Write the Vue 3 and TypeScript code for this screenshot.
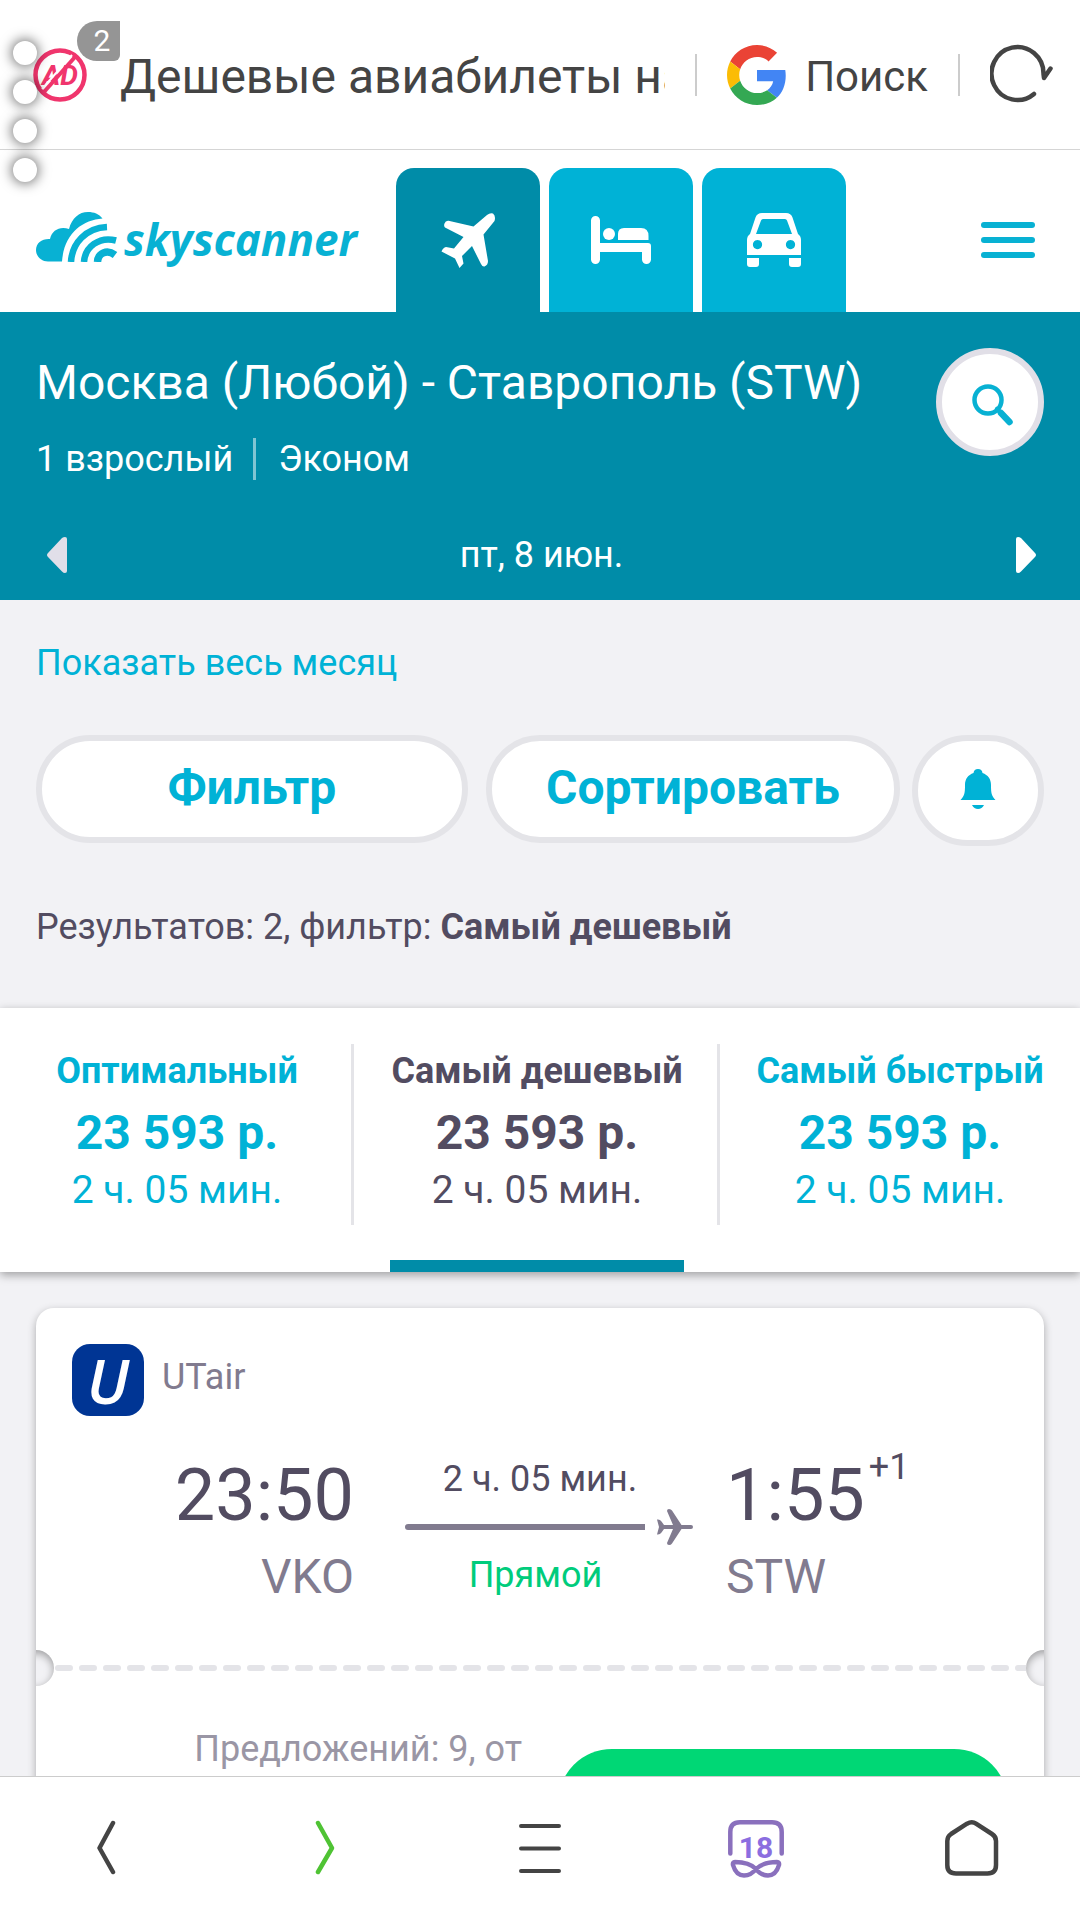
<script setup lang="ts">
import { ref } from 'vue'

interface SortTab {
  id: string
  label: string
  price: string
  duration: string
}

const sortTabs: SortTab[] = [
  { id: 'best', label: 'Оптимальный', price: '23 593 р.', duration: '2 ч. 05 мин.' },
  { id: 'cheapest', label: 'Самый дешевый', price: '23 593 р.', duration: '2 ч. 05 мин.' },
  { id: 'fastest', label: 'Самый быстрый', price: '23 593 р.', duration: '2 ч. 05 мин.' },
]

const activeSort = ref('cheapest')
</script>

<template>
  <div class="browser">
    <header class="address-bar">
      <button class="ad-block" type="button" aria-label="Блокировка рекламы">
        <svg width="54" height="54" viewBox="0 0 54 54">
          <circle cx="27" cy="27" r="24.5" fill="none" stroke="#f0356d" stroke-width="4.5" />
          <text x="27" y="37" text-anchor="middle" class="ad-text">AD</text>
          <path d="M9 41 L39 7" stroke="#fff" stroke-width="2" />
          <path d="M11 44 L42 9" stroke="#f0356d" stroke-width="4" />
        </svg>
        <span class="ad-count">2</span>
      </button>
      <div class="page-title">Дешевые авиабилеты на</div>
      <span class="rule"></span>
      <button class="search-engine" type="button">
        <svg width="60" height="60" viewBox="0 0 48 48">
          <path fill="#EA4335" d="M24 9.5c3.54 0 6.71 1.22 9.21 3.6l6.85-6.85C35.9 2.38 30.47 0 24 0 14.62 0 6.51 5.38 2.56 13.22l7.98 6.19C12.43 13.72 17.74 9.5 24 9.5z" />
          <path fill="#4285F4" d="M46.98 24.55c0-1.57-.15-3.09-.38-4.55H24v9.02h12.94c-.58 2.96-2.26 5.48-4.78 7.18l7.73 6c4.51-4.18 7.09-10.36 7.09-17.65z" />
          <path fill="#FBBC05" d="M10.53 28.59c-.48-1.45-.76-2.99-.76-4.59s.27-3.14.76-4.59l-7.98-6.19C.92 16.46 0 20.12 0 24c0 3.88.92 7.54 2.56 10.78l7.97-6.19z" />
          <path fill="#34A853" d="M24 48c6.48 0 11.93-2.13 15.89-5.81l-7.73-6c-2.15 1.45-4.92 2.3-8.16 2.3-6.26 0-11.57-4.22-13.47-9.91l-7.98 6.19C6.51 42.62 14.62 48 24 48z" />
        </svg>
        <span>Поиск</span>
      </button>
      <span class="rule"></span>
      <button class="reload" type="button" aria-label="Обновить">
        <svg width="64" height="62" viewBox="0 0 64 62" fill="none" stroke="#444" stroke-width="4.5" stroke-linecap="round" stroke-linejoin="round">
          <path d="M44 50 A26 26.5 0 1 1 53.500 30 L54 34 L60.500 24.500" />
        </svg>
      </button>
      <div class="edge-dots"><i></i><i></i><i></i><i></i></div>
    </header>

    <main class="page">
      <div class="site-header">
        <a class="logo" href="#" aria-label="skyscanner">
          <svg width="82" height="50" viewBox="0 0 82 50">
            <path fill="#08b1d3" d="M26 49.5 H12 C5 49.5 0 44 0 38 C0 31 6 26.500 14 27 C16 18 24 14 33 17 C36 6 43 0 52 0 C58 0 63 2 66.500 6.500 C46 8 28 22 26 49.5 Z" />
            <g fill="none" stroke="#08b1d3">
              <path stroke-width="6.500" d="M35 50 C36 31 50 16 71 15" />
              <path stroke-width="6.500" d="M48 50 C49 35 63 24 80 28.500" />
              <path stroke-width="7.500" d="M61.500 50 C62 41 71 37 79 43" />
            </g>
          </svg>
          <span>skyscanner</span>
        </a>
        <nav class="verticals">
          <a class="vertical current" href="#" aria-label="Авиабилеты">
            <svg width="56" height="58" viewBox="0 0 56 58" fill="#fff">
              <path d="M33.500 15.500 L47 4 Q50 1.500 53 2.500 Q56 5 54.500 10 L43.500 23.500 L48 50 Q48 54 44.500 55.500 Q42.500 56 41 53 L32 35 L22 45 L23.500 52.500 L19.500 57 L15 47.500 L1.500 40.500 Q3 36.500 6 36 L14 37.500 L23.500 26 L5 16.500 Q3.500 15 4.500 12.500 Q5.500 9.500 8.500 9.800 Z" />
            </svg>
          </a>
          <a class="vertical" href="#" aria-label="Отели">
            <svg width="60" height="48" viewBox="0 0 60 48" fill="#fff">
              <path d="M0 4.500 a4.500 4.500 0 0 1 9 0 V27 H57 Q60 27 60 30 V43.500 a4.500 4.500 0 0 1 -9 0 V36 H9 V43.500 a4.500 4.500 0 0 1 -9 0 Z" />
              <circle cx="18" cy="18" r="6" />
              <path d="M27 24 V18 Q27 12 33 12 H50 Q57.500 12 57.500 20 V24 Z" />
            </svg>
          </a>
          <a class="vertical" href="#" aria-label="Автомобили">
            <svg width="54" height="54" viewBox="0 0 54 54" fill="#fff">
              <path fill-rule="evenodd" d="M15 0 H39 Q44 0 45.500 4.500 L51 21 Q54 23 54 27 V42 H0 V27 Q0 23 3 21 L8.500 4.500 Q10 0 15 0 Z M16 6 Q14.500 6 14 7.500 L9 21 H45 L40 7.500 Q39.500 6 38 6 Z M10.500 27 a4.600 4.600 0 1 0 .01 0 Z M43.500 27 a4.600 4.600 0 1 0 .01 0 Z" />
              <path d="M0 45 H12 V51 Q12 54 9 54 H3 Q0 54 0 51 Z M42 45 H54 V51 Q54 54 51 54 H45 Q42 54 42 51 Z" />
            </svg>
          </a>
        </nav>
        <button class="menu" type="button" aria-label="Меню">
          <svg width="54" height="36" viewBox="0 0 54 36" fill="#08b1d3">
            <rect width="54" height="6" rx="3" />
            <rect y="15" width="54" height="6" rx="3" />
            <rect y="30" width="54" height="6" rx="3" />
          </svg>
        </button>
      </div>

      <section class="summary">
        <div class="summary-top">
          <div>
            <h1>Москва (Любой) - Ставрополь (STW)</h1>
            <p class="travellers"><span>1 взрослый</span><span>Эконом</span></p>
          </div>
          <button class="edit-search" type="button" aria-label="Изменить поиск">
            <svg width="48" height="48" viewBox="0 0 48 48" fill="none" stroke="#08b1d3" stroke-linecap="round">
              <circle cx="22" cy="22" r="13.500" stroke-width="4.500" />
              <path stroke-width="6.500" d="M35 35 L43.500 44" />
              <path stroke-width="4.500" d="M31 31 L36 36" />
            </svg>
          </button>
        </div>
        <div class="dates">
          <button type="button" aria-label="Предыдущий день">
            <svg width="20" height="36" viewBox="0 0 20 36"><path fill="#e1dfe9" d="M15 1 Q16.500 0 18 0 Q20 0 20 2 V34 Q20 36 18 36 Q16.500 36 15 34.500 L1 20 Q-1 18 1 16 Z" /></svg>
          </button>
          <span>пт, 8 июн.</span>
          <button type="button" aria-label="Следующий день">
            <svg width="20" height="36" viewBox="0 0 20 36"><path fill="#fff" d="M5 1 Q3.500 0 2 0 Q0 0 0 2 V34 Q0 36 2 36 Q3.500 36 5 34.500 L19 20 Q21 18 19 16 Z" /></svg>
          </button>
        </div>
      </section>

      <section class="controls">
        <a class="month-link" href="#">Показать весь месяц</a>
        <div class="control-row">
          <button class="pill filter" type="button">Фильтр</button>
          <button class="pill sort" type="button">Сортировать</button>
          <button class="pill bell" type="button" aria-label="Уведомления о ценах">
            <svg width="36" height="40" viewBox="0 0 36 40" fill="#00b2d6">
              <path d="M18 0 Q22 0 22.500 4 C28 6 31 10 31 16 C31 24 31.500 27 35.500 31 H.5 C4.500 27 5 24 5 16 C5 10 8 6 13.500 4 Q14 0 18 0 Z" />
              <path d="M12 36 H24 Q22 40 18 40 Q14 40 12 36 Z" />
            </svg>
          </button>
        </div>
        <p class="result-count">Результатов: 2, фильтр: <b>Самый дешевый</b></p>
      </section>

      <div class="sort-tabs">
        <button
          v-for="tab in sortTabs"
          :key="tab.id"
          type="button"
          class="sort-tab"
          :class="{ active: tab.id === activeSort }"
          @click="activeSort = tab.id"
        >
          <span class="sort-body">
            <b class="sort-label">{{ tab.label }}</b>
            <b class="sort-price">{{ tab.price }}</b>
            <span class="sort-time">{{ tab.duration }}</span>
          </span>
        </button>
      </div>

      <article class="ticket">
        <div class="carrier">
          <span class="carrier-logo">U</span>
          <span class="carrier-name">UTair</span>
        </div>
        <div class="route">
          <div class="depart">
            <div class="time">23:50</div>
            <div class="code">VKO</div>
          </div>
          <div class="leg">
            <div class="leg-time">2 ч. 05 мин.</div>
            <div class="leg-line">
              <span></span>
              <svg width="36" height="36" viewBox="0 0 36 36" fill="#817b8f">
                <path d="M0 10.500 Q3 10 4.500 12.500 L7 16 H16 L10 2 Q10 0 12 0 Q14 0 15 1.500 L24.500 16 H34 Q36 16 36 18 Q36 20 34 20 H24.500 L15 34.500 Q14 36 12 36 Q10 36 10 34 L16 20 H7 L4.500 23.500 Q3 26 0 25.500 L2 18 Z" />
              </svg>
            </div>
            <div class="direct">Прямой</div>
          </div>
          <div class="arrive">
            <div class="time">1:55<span class="next-day">+1</span></div>
            <div class="code">STW</div>
          </div>
        </div>
        <div class="perforation">
          <span class="notch"></span>
          <svg class="dashes" height="6">
            <line x1="4" y1="3" x2="100%" y2="3" stroke="#e4e4e8" stroke-width="6" stroke-linecap="round" stroke-dasharray="12 12" />
          </svg>
          <span class="notch right"></span>
        </div>
        <div class="offer">
          <p>Предложений: 9, от</p>
          <button class="choose" type="button" aria-label="Выбрать"></button>
        </div>
      </article>
    </main>

    <nav class="toolbar">
      <button type="button" aria-label="Назад">
        <svg width="56" height="58" viewBox="0 0 56 58" fill="none" stroke="#444" stroke-width="4.500" stroke-linecap="round" stroke-linejoin="round"><path d="M33 3 L19.500 28 L33 52" /></svg>
      </button>
      <button type="button" aria-label="Вперед">
        <svg width="56" height="58" viewBox="0 0 56 58" fill="none" stroke="#4fc334" stroke-width="4.500" stroke-linecap="round" stroke-linejoin="round"><path d="M22 3 L36 28 L22 52" /></svg>
      </button>
      <button type="button" aria-label="Меню браузера">
        <svg width="56" height="58" viewBox="0 0 56 58" fill="none" stroke="#444" stroke-width="4" stroke-linecap="round"><path d="M9 6 H47 M9 28.500 H47 M9 51 H47" /></svg>
      </button>
      <button type="button" aria-label="Вкладки">
        <svg width="56" height="58" viewBox="0 0 56 58" fill="none" stroke="#8a70bd" stroke-width="4.500" stroke-linecap="round" stroke-linejoin="round">
          <path d="M2.300 33.500 V12 Q2.300 2.300 12 2.300 H44 Q53.700 2.300 53.700 12 V33.500" />
          <path d="M28 49 C22 43 14 42 7 42 Q4.500 42 5 45 C7 52 11 55.500 16 55.500 C21 55.500 25 53 28 49 C34 43 42 42 49 42 Q51.500 42 51 45 C49 52 45 55.500 40 55.500 C35 55.500 31 53 28 49 Z" />
          <text x="28" y="38" text-anchor="middle" class="tab-count">18</text>
        </svg>
      </button>
      <button type="button" aria-label="Домой">
        <svg width="56" height="58" viewBox="0 0 56 58" fill="none" stroke="#444" stroke-width="4.500" stroke-linejoin="round">
          <path d="M3.300 21 Q3.300 16.500 7 14 L23 3.700 Q28 1 32 3.700 L48 14 Q52 16.500 52 21 V45 Q52 53.500 43.500 53.500 H12 Q3.300 53.500 3.300 45 Z" />
        </svg>
      </button>
    </nav>
  </div>
</template>

<style>
body {
  margin: 0;
}
</style>

<style scoped>
.browser {
  position: relative;
  display: flex;
  flex-direction: column;
  height: 100vh;
  overflow: hidden;
  background: #fff;
  color: #524c61;
  font-family: Roboto, sans-serif;
  font-size: 36px;
  line-height: 42px;
}

.browser *,
.browser *::before,
.browser *::after {
  box-sizing: border-box;
}

button {
  margin: 0;
  padding: 0;
  border: 0;
  background: none;
  color: inherit;
  font: inherit;
  cursor: pointer;
}

a {
  color: #00b2d6;
  text-decoration: none;
}

p,
h1 {
  margin: 0;
}

svg {
  display: block;
  flex: none;
}

/* Browser address bar */
.address-bar {
  position: relative;
  z-index: 2;
  display: flex;
  flex: none;
  align-items: center;
  height: 150px;
  padding: 0 26px 0 33px;
  border-bottom: 1px solid #d5d5d5;
  color: #444;
}

.ad-block {
  position: relative;
  margin-right: 33px;
}

.ad-text {
  fill: #f0356d;
  font-size: 28px;
  font-style: italic;
  font-weight: 700;
}

.ad-count {
  position: absolute;
  top: -27px;
  left: 44px;
  width: 43px;
  padding-left: 7px;
  border-radius: 20px 0 6px 20px;
  background: #959595;
  color: #fff;
  font-size: 30px;
  line-height: 40px;
  text-align: center;
}

.page-title {
  flex: 1;
  min-width: 0;
  margin-right: 30px;
  padding-top: 4px;
  overflow: hidden;
  font-size: 48px;
  line-height: 60px;
  white-space: nowrap;
}

.rule {
  flex: none;
  width: 2px;
  height: 42px;
  background: #ccc;
}

.search-engine {
  display: flex;
  gap: 18px;
  align-items: center;
  margin: 0 30px;
  font-size: 42px;
  line-height: 60px;
}

.search-engine span {
  padding-top: 4px;
}

.reload {
  margin-left: 30px;
}

.edge-dots {
  position: absolute;
  top: 41px;
  left: 13px;
  display: grid;
  gap: 15px;
  pointer-events: none;
}

.edge-dots i {
  width: 24px;
  height: 24px;
  border-radius: 50%;
  background: #fff;
  box-shadow: 0 0 12px 2px rgba(0, 0, 0, 0.5);
}

/* Scrolled page */
.page {
  flex: 1;
  min-height: 0;
  overflow: hidden;
  background: #f2f2f5;
}

.site-header {
  display: flex;
  align-items: flex-end;
  height: 162px;
  padding: 0 36px;
  background: #fff;
}

.logo {
  display: flex;
  flex: none;
  gap: 6px;
  width: 360px;
  height: 144px;
  padding-top: 44px;
  color: #08b1d3;
  font-family: "Open Sans", sans-serif;
  font-size: 44px;
  font-style: italic;
  font-weight: 700;
  line-height: 54px;
}

.verticals {
  display: flex;
  gap: 9px;
}

.vertical {
  display: flex;
  align-items: center;
  justify-content: center;
  width: 144px;
  height: 144px;
  border-radius: 18px 18px 0 0;
  background: #00b2d6;
}

.vertical.current {
  background: #008ca8;
}

.menu {
  display: flex;
  align-items: center;
  height: 144px;
  margin-left: auto;
  padding-right: 9px;
}

.summary {
  padding: 36px 36px 24px;
  background: #008ca8;
  color: #fff;
}

.summary-top {
  display: flex;
  justify-content: space-between;
}

h1 {
  font-size: 48px;
  font-weight: 400;
  line-height: 70px;
}

.travellers {
  display: flex;
  margin-top: 20px;
}

.travellers span + span {
  margin-left: 20px;
  padding-left: 22px;
  border-left: 3px solid #80c5d3;
}

.edit-search {
  display: flex;
  flex: none;
  align-items: center;
  justify-content: center;
  width: 108px;
  height: 108px;
  border: 6px solid #e1dfe7;
  border-radius: 50%;
  background: #fff;
}

.dates {
  display: flex;
  align-items: center;
  justify-content: space-between;
  margin-top: 54px;
  padding: 0 8px 0 11px;
}

/* Filter and sort controls */
.controls {
  padding: 42px 36px 60px;
}

.month-link {
  display: block;
}

.control-row {
  display: flex;
  align-items: flex-start;
  margin-top: 51px;
}

.pill {
  height: 108px;
  padding-bottom: 2px;
  border: 6px solid #e4e4e8;
  border-radius: 54px;
  background: #fff;
  color: #00b2d6;
  font-size: 48px;
  font-weight: 700;
}

.filter {
  flex: 432;
  margin-right: 18px;
}

.sort {
  flex: 414;
  margin-right: 12px;
}

.bell {
  display: flex;
  flex: none;
  align-items: center;
  justify-content: center;
  width: 132px;
  height: 111px;
  padding-bottom: 4px;
  border-radius: 56px;
}

.result-count {
  margin-top: 60px;
}

.sort-tabs {
  position: relative;
  display: grid;
  grid-template-columns: 354fr 366fr 360fr;
  padding-top: 36px;
  background: #fff;
  box-shadow: 0 3px 9px rgba(0, 0, 0, 0.35);
}

.sort-tab {
  padding: 0 36px;
  color: #00b2d6;
}

.sort-tab:not(:last-child) {
  border-right: 3px solid;
  border-image: linear-gradient(to top, transparent 48px, #e4e4e8 48px) 1;
}

.sort-tab:not(:last-child) {
  padding-right: 33px;
}

.sort-body {
  display: flex;
  flex-direction: column;
  align-items: center;
  height: 228px;
  border-bottom: 12px solid transparent;
  white-space: nowrap;
}

.active {
  color: #524c61;
}

.active .sort-body {
  border-bottom-color: #008ca8;
}

.sort-label {
  line-height: 54px;
}

.sort-price {
  font-size: 48px;
  line-height: 70px;
}

.sort-time {
  font-size: 39px;
  line-height: 44px;
}

/* Flight ticket */
.ticket {
  margin: 36px;
  border-radius: 18px;
  background: #fff;
  box-shadow: 0 3px 9px rgba(0, 0, 0, 0.3);
}

.carrier {
  display: flex;
  gap: 18px;
  padding: 36px 36px 0;
}

.carrier-logo {
  width: 72px;
  height: 72px;
  border-radius: 18px;
  background: #003594;
  color: #fff;
  font-family: "Open Sans", sans-serif;
  font-size: 62px;
  font-style: italic;
  font-weight: 600;
  line-height: 72px;
  text-align: center;
}

.carrier-name {
  color: #817b8f;
  line-height: 66px;
}

.route {
  display: grid;
  grid-template-columns: 1fr 306px 1fr;
  gap: 33px;
  padding: 36px 36px 38px;
}

.depart {
  text-align: right;
}

.time {
  display: flex;
  font-size: 72px;
  line-height: 88px;
}

.depart .time {
  justify-content: flex-end;
}

.next-day {
  margin-left: 4px;
  font-size: 36px;
  line-height: 30px;
}

.code {
  color: #817b8f;
  font-size: 48px;
  line-height: 74px;
}

.leg {
  padding-top: 6px;
  text-align: center;
}

.leg-line {
  display: flex;
  gap: 12px;
  align-items: center;
  margin: 9px 0;
  padding-left: 18px;
}

.leg-line span {
  flex: 1;
  height: 6px;
  border-radius: 3px 0 0 3px;
  background: #817b8f;
}

.direct {
  padding-right: 9px;
  color: #00cc7c;
}

.perforation {
  display: flex;
  align-items: center;
  margin-top: -2px;
}

.dashes {
  flex: 1;
  min-width: 0;
}

.notch {
  flex: none;
  width: 18px;
  height: 36px;
  overflow: hidden;
}

.notch::before {
  display: block;
  width: 36px;
  height: 36px;
  margin-left: -18px;
  border-radius: 50%;
  background: #f2f2f5;
  box-shadow: inset 0 3px 9px rgba(0, 0, 0, 0.35);
  content: "";
}

.notch.right::before {
  margin-left: 0;
}

.offer {
  display: grid;
  grid-template-columns: 1fr 1fr;
  gap: 36px;
  padding: 42px 36px 36px;
  color: #9a96a5;
  text-align: right;
}

.choose {
  height: 108px;
  margin-top: 21px;
  border-radius: 54px;
  background: #00d775;
}

/* Browser bottom toolbar */
.toolbar {
  z-index: 2;
  display: grid;
  flex: none;
  grid-template-columns: repeat(5, 1fr);
  height: 144px;
  border-top: 1px solid #ccc;
  background: #fff;
}

.toolbar button {
  display: flex;
  align-items: center;
  justify-content: center;
}

.tab-count {
  fill: #8b6ee0;
  stroke: none;
  font-size: 30px;
  font-weight: 700;
}
</style>
